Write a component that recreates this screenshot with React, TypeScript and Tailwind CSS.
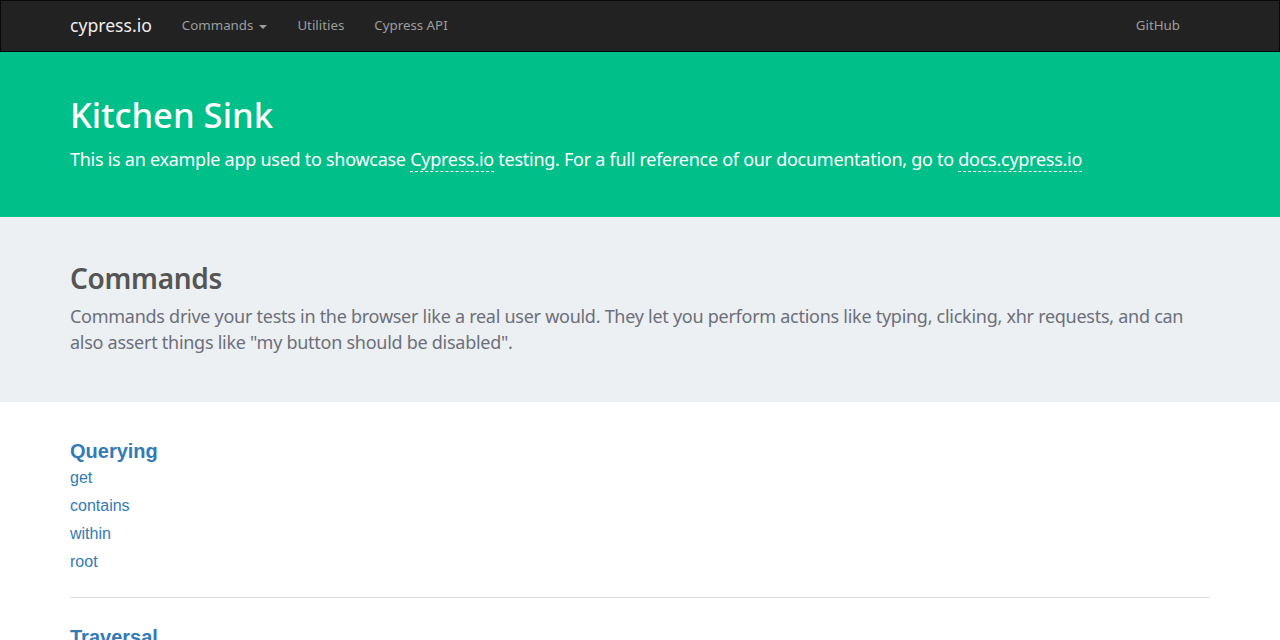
const navFont = { fontFamily: '"Noto Sans", "Open Sans", sans-serif' };

const queries = ["get", "contains", "within", "root"];

export default function App() {
  return (
    <div className="min-h-screen bg-white" style={navFont}>
      {/* navbar */}
      <nav className="h-[52px] border border-[#080808] bg-[#222222]">
        <div className="mx-auto flex h-[49px] w-[1170px] items-center px-[15px]">
          <span className="mr-[15px] text-[17.6px] text-[#eeeeee]">cypress.io</span>
          <div className="flex items-center text-[13.3px] text-[#9d9d9d]">
            <span className="flex items-center px-[15px]">
              Commands
              <span className="ml-[6px] mt-[2px] h-0 w-0 border-x-[4px] border-t-[4px] border-x-transparent border-t-[#9d9d9d]" />
            </span>
            <span className="px-[15px]">Utilities</span>
            <span className="px-[15px]">Cypress API</span>
          </div>
          <span className="ml-auto pr-[30px] text-[13.3px] text-[#9d9d9d]">GitHub</span>
        </div>
      </nav>

      {/* hero */}
      <div className="h-[165px] bg-[#00bf88] text-white">
        <div className="mx-auto w-[1170px] px-[15px] pt-[40px]">
          <h1 className="text-[34.6px] font-medium leading-[46px]">Kitchen Sink</h1>
          <p className="mt-[8px] text-[18px] leading-[26px] tracking-[-0.27px]">
            This is an example app used to showcase{" "}
            <span className="border-b border-dashed border-white">Cypress.io</span> testing. For a
            full reference of our documentation, go to{" "}
            <span className="border-b border-dashed border-white">docs.cypress.io</span>
          </p>
        </div>
      </div>

      {/* commands banner */}
      <div className="h-[185px] bg-[#ecf0f3]">
        <div className="mx-auto w-[1170px] px-[15px] pt-[41px]">
          <h2 className="text-[28px] font-semibold leading-[40px] tracking-[-0.3px] text-[#555555]">Commands</h2>
          <p className="mt-[5px] text-[18px] leading-[26px] tracking-[-0.27px] text-[#6c6f7a]">
            Commands drive your tests in the browser like a real user would. They let you perform
            actions like typing, clicking, xhr requests, and can also assert things like "my button
            should be disabled".
          </p>
        </div>
      </div>

      {/* list */}
      <div className="mx-auto w-[1170px] px-[15px] pt-[36px]" style={{ fontFamily: '"Liberation Sans", Arial, sans-serif' }}>
        <h4 className="text-[20px] font-bold leading-[26px] text-[#337ab7]">Querying</h4>
        <ul className="text-[16px] text-[#337ab7]">
          {queries.map((q) => (
            <li key={q} className="leading-[28px]">
              {q}
            </li>
          ))}
        </ul>
        <hr className="mt-[21px] border-t border-[#dddddd]" />
        <h4 className="mt-[26px] text-[20px] font-bold leading-[26px] text-[#337ab7]">Traversal</h4>
      </div>
    </div>
  );
}
